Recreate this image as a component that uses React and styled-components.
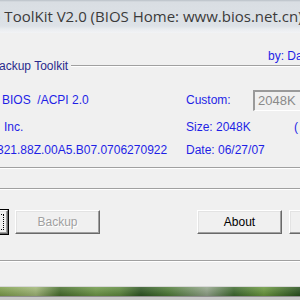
import React from "react";
import styled, { createGlobalStyle } from "styled-components";

const GlobalStyle = createGlobalStyle`
  html, body {
    margin: 0;
    padding: 0;
    background: #f0f0f0;
    overflow: hidden;
  }
`;

const App = () => {
  return (
    <>
      <GlobalStyle />
      <Frame>
        <TitleBar>
          <TitleText>Backup ToolKit V2.0 (BIOS Home: www.bios.net.cn)</TitleText>
        </TitleBar>

        <Client>
          <ByLine>
            <Label>by: Dan</Label>
          </ByLine>

          {/* info group */}
          <GroupHeader>
            <Legend>ackup Toolkit</Legend>
            <Rule />
          </GroupHeader>
          <InfoGrid>
            <Cell $shift={2}>
              <Label>BIOS&nbsp;&nbsp;/ACPI 2.0</Label>
            </Cell>
            <Cell>
              <Label $width={67}>Custom:</Label>
              <TextBox>2048K</TextBox>
            </Cell>
            <Cell $shift={4}>
              <Label>Inc.</Label>
            </Cell>
            <Cell>
              <Label $width={108}>Size: 2048K</Label>
              <Label>(</Label>
            </Cell>
            <Cell $shift={-3}>
              <Label>321.88Z.00A5.B07.0706270922</Label>
            </Cell>
            <Cell>
              <Label>Date: 06/27/07</Label>
            </Cell>
          </InfoGrid>
          <Rule />

          {/* buttons group */}
          <Spacer $h={19} />
          <Rule />
          <ButtonRow>
            <Button $focused>Restore</Button>
            <Button disabled>Backup</Button>
            <Gap />
            <Button>About</Button>
            <Button>Exit</Button>
          </ButtonRow>
          <Rule />
          <Spacer $h={24} />
        </Client>

        <Taskbar />
        <TaskbarEdge />
      </Frame>
    </>
  );
};

const Frame = styled.div`
  width: 300px;
  height: 300px;
  display: flex;
  flex-direction: column;
  overflow: hidden;
  background: #f0f0f0;
`;

const TitleBar = styled.div`
  height: 33px;
  flex-shrink: 0;
  display: flex;
  align-items: center;
  padding-bottom: 2px;
  box-sizing: border-box;
  background: linear-gradient(
    #b9c0c7 0px,
    #d9dee3 2px,
    #dde2e7 26px,
    #e9ecef 29px,
    #f2f3f5 33px
  );
  overflow: hidden;
`;

const TitleText = styled.div`
  white-space: nowrap;
  margin-left: -51px;
  font-family: "Open Sans", "DejaVu Sans", sans-serif;
  font-size: 15px;
  color: #3b3b3b;
`;

const Client = styled.div`
  display: flex;
  flex-direction: column;
  flex: 1;
`;

const ByLine = styled.div`
  height: 30px;
  display: flex;
  align-items: flex-end;
  padding-left: 268px;
  overflow: hidden;
`;

const Label = styled.span`
  font-family: "Liberation Sans", Arial, sans-serif;
  font-size: 12px;
  line-height: 14px;
  color: #1f1fe6;
  white-space: nowrap;
  width: ${(p) => (p.$width ? `${p.$width}px` : "auto")};
  flex-shrink: 0;
`;

const GroupHeader = styled.div`
  height: 6px;
  display: flex;
  align-items: center;
  gap: 3px;
`;

const Legend = styled.span`
  font-family: "Liberation Sans", Arial, sans-serif;
  font-size: 12px;
  line-height: 14px;
  color: #2a2a8c;
  white-space: nowrap;
  margin-left: -1px;
`;

const Rule = styled.div`
  flex: 1;
  height: 0;
  border-top: 1px solid #a0a0a0;
  border-bottom: 1px solid #ffffff;
`;

const InfoGrid = styled.div`
  display: grid;
  grid-template-columns: 186px 1fr;
  grid-template-rows: 22px 14px 14px;
  row-gap: 9px;
  padding: 20px 0 10px;
  & > :nth-child(5), & > :nth-child(6) {
    margin-top: -1px;
  }
`;

const Cell = styled.div`
  display: flex;
  align-items: center;
  margin-left: ${(p) => p.$shift || 0}px;
  white-space: nowrap;
`;

const TextBox = styled.div`
  width: 60px;
  height: 21px;
  box-sizing: border-box;
  flex-shrink: 0;
  padding-left: 3px;
  display: flex;
  align-items: center;
  font-family: "Liberation Sans", Arial, sans-serif;
  font-size: 13px;
  color: #8a8a8a;
  background: #f0f0f0;
  border-top: 2px solid #9a9a9a;
  border-left: 2px solid #9a9a9a;
  border-bottom: 1px solid #ffffff;
  border-right: 1px solid #ffffff;
`;

const Spacer = styled.div`
  height: ${(p) => p.$h}px;
  flex-shrink: 0;
`;

const ButtonRow = styled.div`
  display: flex;
  gap: 7px;
  margin-left: -77px;
  padding: 20px 0 26px;
`;

const Gap = styled.div`
  width: 83px;
  flex-shrink: 0;
`;

const Button = styled.button`
  width: 85px;
  height: 24px;
  flex-shrink: 0;
  position: relative;
  padding: 0;
  background: #f0f0f0;
  font-family: "Liberation Sans", Arial, sans-serif;
  font-size: 12px;
  color: #000000;
  border-style: solid;
  border-width: 1px;
  border-color: #ffffff #696969 #696969 #ffffff;
  box-shadow: inset -1px -1px 0 #a0a0a0, inset 1px 1px 0 #e3e3e3;
  outline: ${(p) => (p.$focused ? "1px solid #000" : "none")};
  outline-offset: 0;

  &:disabled {
    color: #a0a0a0;
    text-shadow: 1px 1px 0 #ffffff;
  }

  &::after {
    content: "";
    display: ${(p) => (p.$focused ? "block" : "none")};
    position: absolute;
    inset: 3px;
    border: 1px dotted #000;
  }
`;

const Taskbar = styled.div`
  height: 9px;
  flex-shrink: 0;
  border-top: 1px solid #d8d8d8;
  background:
    linear-gradient(rgba(255, 255, 255, 0.15), rgba(0, 0, 0, 0.15)),
    linear-gradient(
      90deg,
      #7d9f4a 0%,
      #a2b878 12%,
      #476f2c 20%,
      #6f9a48 32%,
      #5e8a3e 40%,
      #2e5622 47%,
      #4e7c36 56%,
      #93a58a 69%,
      #3e6a2e 78%,
      #6b9a3e 88%,
      #27501c 100%
    );
`;

const TaskbarEdge = styled.div`
  flex: 1;
  border-top: 1px solid #8e8e8e;
  background: #c9c9c9;
`;

export default App;
